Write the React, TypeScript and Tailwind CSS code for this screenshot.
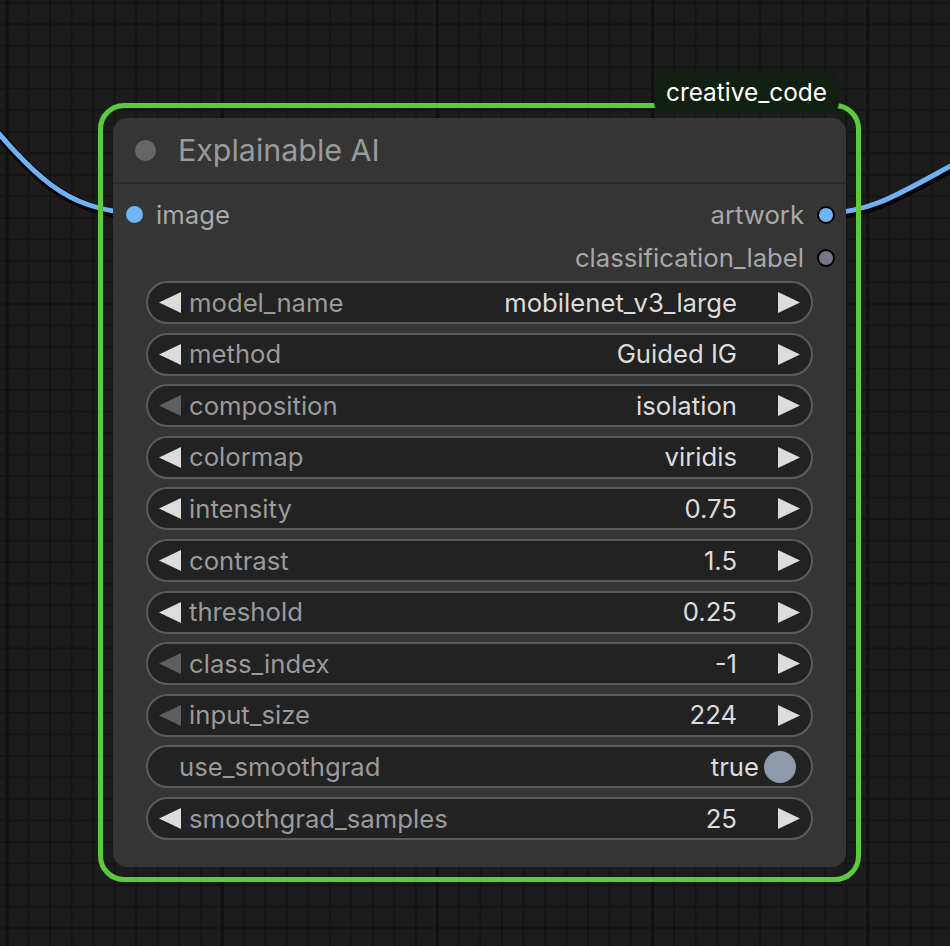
import React from "react";

type Row =
  | { kind: "combo"; label: string; value: string; leftActive: boolean }
  | { kind: "toggle"; label: string; value: string };

const rows: Row[] = [
  { kind: "combo", label: "model_name", value: "mobilenet_v3_large", leftActive: true },
  { kind: "combo", label: "method", value: "Guided IG", leftActive: true },
  { kind: "combo", label: "composition", value: "isolation", leftActive: false },
  { kind: "combo", label: "colormap", value: "viridis", leftActive: true },
  { kind: "combo", label: "intensity", value: "0.75", leftActive: true },
  { kind: "combo", label: "contrast", value: "1.5", leftActive: true },
  { kind: "combo", label: "threshold", value: "0.25", leftActive: true },
  { kind: "combo", label: "class_index", value: "-1", leftActive: false },
  { kind: "combo", label: "input_size", value: "224", leftActive: false },
  { kind: "toggle", label: "use_smoothgrad", value: "true" },
  { kind: "combo", label: "smoothgrad_samples", value: "25", leftActive: true },
];

function LeftArrow({ active }: { active: boolean }) {
  return (
    <svg width="22" height="21" viewBox="0 0 22 21" className="shrink-0">
      <polygon points="22,0 22,21 0,10.5" fill={active ? "#dcdcdc" : "#5e5e5e"} />
    </svg>
  );
}

function RightArrow() {
  return (
    <svg width="22" height="21" viewBox="0 0 22 21" className="shrink-0">
      <polygon points="0,0 0,21 22,10.5" fill="#dcdcdc" />
    </svg>
  );
}

function Widget({ row }: { row: Row }) {
  if (row.kind === "toggle") {
    return (
      <div className="h-[43px] rounded-full border-2 border-[#5b5b5b] bg-[#222222] flex items-center pl-[31px] pr-[15px]">
        <span className="text-[#9a9a9a] leading-none">{row.label}</span>
        <span className="flex-1" />
        <span className="text-[#dcdcdc] leading-none mr-[5px]">{row.value}</span>
        <span className="w-[32px] h-[32px] rounded-full bg-[#8c9aaa]" />
      </div>
    );
  }
  return (
    <div className="h-[43px] rounded-full border-2 border-[#5b5b5b] bg-[#222222] flex items-center pl-[11px] pr-[11px]">
      <LeftArrow active={row.leftActive} />
      <span className="text-[#9a9a9a] leading-none ml-[8px]">{row.label}</span>
      <span className="flex-1" />
      <span className="text-[#dcdcdc] leading-none mr-[41px]">{row.value}</span>
      <RightArrow />
    </div>
  );
}

function Background() {
  return (
    <svg className="absolute inset-0" width="950" height="946" viewBox="0 0 950 946">
      <defs>
        <pattern id="minor" x="6" y="1.7" width="21.52" height="21.52" patternUnits="userSpaceOnUse">
          <rect x="0" y="0" width="2" height="21.52" fill="#151515" />
          <rect x="0" y="0" width="21.52" height="2" fill="#151515" />
        </pattern>
      </defs>
      <rect x="0" y="0" width="950" height="946" fill="#1c1c1c" />
      <rect x="0" y="0" width="950" height="946" fill="url(#minor)" />
      <rect x="5.5" y="0" width="3" height="946" fill="#111111" />
      <rect x="220.7" y="0" width="3" height="946" fill="#111111" />
      <rect x="435.9" y="0" width="3" height="946" fill="#111111" />
      <rect x="651.1" y="0" width="3" height="946" fill="#111111" />
      <rect x="866.3" y="0" width="3" height="946" fill="#111111" />
      {/* wires */}
      <path d="M -30 100 C 30 170, 60 210, 135 213" stroke="#000000" strokeWidth="9" fill="none" transform="translate(1,2)" opacity="0.85" />
      <path d="M -30 100 C 30 170, 60 210, 135 213" stroke="#6fb2f4" strokeWidth="5" fill="none" />
      <path d="M 825 213 C 880 213, 910 185, 1000 140" stroke="#000000" strokeWidth="9" fill="none" transform="translate(1,2)" opacity="0.85" />
      <path d="M 825 213 C 880 213, 910 185, 1000 140" stroke="#6fb2f4" strokeWidth="5" fill="none" />
    </svg>
  );
}

export default function App() {
  return (
    <div
      className="relative w-[950px] h-[946px] overflow-hidden bg-[#1c1c1c]"
      style={{ fontFamily: "Inter, 'Noto Sans', sans-serif" }}
    >
      <Background />
      <div className="absolute left-[98px] top-[103px] w-[763px] rounded-[26px] border-[5px] border-[#5cca3c] p-[10px]">
        <div className="absolute right-[17px] top-[-36px] h-[41px] rounded-[10px] bg-[#122012] px-[12px] flex items-center">
          <span className="text-white text-[24.4px] leading-none">creative_code</span>
        </div>
        <div className="rounded-[14px] bg-[#353535] overflow-hidden text-[25.7px]">
          <div className="h-[66px] flex items-center pl-[22px] border-b-2 border-[#2a2a2a]">
            <span className="w-[21px] h-[21px] rounded-full bg-[#666666]" />
            <span className="ml-[22px] text-[30.4px] text-[#9a9a9a] leading-none">Explainable AI</span>
          </div>
          <div className="pt-[9px]">
            <div className="h-[43px] flex items-center">
              <span className="ml-[13px] w-[17px] h-[17px] rounded-full bg-[#70b4f6]" />
              <span className="ml-[13px] text-[#a8a8a8] leading-none">image</span>
              <span className="flex-1" />
              <span className="text-[#a8a8a8] leading-none mr-[13px]">artwork</span>
              <span className="mr-[11px] w-[18px] h-[18px] rounded-full bg-[#70b4f6] border-2 border-black" />
            </div>
            <div className="h-[43px] flex items-center justify-end">
              <span className="text-[#a8a8a8] leading-none mr-[13px]">classification_label</span>
              <span className="mr-[11px] w-[18px] h-[18px] rounded-full bg-[#767686] border-2 border-black" />
            </div>
          </div>
          <div className="px-[33px] pt-[2px] pb-[27px] flex flex-col gap-[8.6px]">
            {rows.map((r) => (
              <Widget key={r.label} row={r} />
            ))}
          </div>
        </div>
      </div>
    </div>
  );
}
